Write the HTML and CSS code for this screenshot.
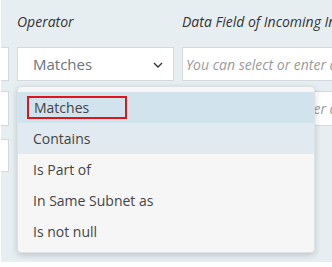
FILE: index.html
```html
<!DOCTYPE html>
<html>
<head>
<meta charset="utf-8">
<link rel="stylesheet" href="styles.css">
</head>
<body>
<div class="page">
  <div class="panel">
    <div class="grid">
      <div class="label"></div>
      <div class="label">Operator</div>
      <div class="label">Data Field of Incoming Information</div>

      <div class="box r1"></div>
      <div class="box r1 select">
        <span class="value">Matches</span>
        <svg class="chev" width="10" height="6" viewBox="0 0 10 6"><path d="M1 1 L5 5 L9 1" fill="none" stroke="#333" stroke-width="1.4"/></svg>
      </div>
      <div class="box r1"><span class="ph">You can select or enter a value</span></div>

      <div class="box r2"></div>
      <div class="box r2"></div>
      <div class="box r2"><span class="ph">You can select or enter a value</span></div>

      <div class="box r3"></div>
    </div>

    <div class="menu">
      <div class="item selected"><span class="mark">Matches</span></div>
      <div class="item hover">Contains</div>
      <div class="item">Is Part of</div>
      <div class="item">In Same Subnet as</div>
      <div class="item">Is not null</div>
    </div>
  </div>
</div>
</body>
</html>
```
FILE: styles.css
```css
html, body {
  margin: 0;
  padding: 0;
  background: #ffffff;
  overflow: hidden;
}
body {
  width: 332px;
  height: 267px;
  font-family: "Open Sans", "Noto Sans", sans-serif;
}
.page {
  padding-left: 1px;
  height: 262px;
  overflow: hidden;
}
.panel {
  position: relative;
  background: #e7eef2;
  height: 262px;
  overflow: hidden;
}
.grid {
  display: grid;
  grid-template-columns: 100px 157px 220px;
  grid-template-rows: 20px 49px 45px 45px;
  column-gap: 8px;
  margin-left: -92px;
  padding-top: 12px;
}
.label {
  font-style: italic;
  font-size: 14px;
  color: #333;
  line-height: 20px;
  white-space: nowrap;
}
.box {
  background: #fff;
  border: 1px solid #d3d9dd;
  box-sizing: border-box;
  display: flex;
  align-items: center;
  white-space: nowrap;
  overflow: hidden;
}
.r1 {
  margin-top: 15px;
  height: 34px;
}
.r2 {
  margin-top: 10px;
  height: 35px;
}
.r3 {
  margin-top: 13px;
  height: 33px;
}
.select {
  padding: 0 10px 0 15px;
  justify-content: space-between;
}
.value {
  font-size: 15px;
  color: #687480;
}
.ph {
  font-style: italic;
  font-size: 14px;
  color: #9a9a9a;
  padding-left: 3px;
}
.chev {
  margin-top: 2px;
}
.menu {
  position: absolute;
  left: 16px;
  top: 86px;
  width: 298px;
  height: 167px;
  box-sizing: border-box;
  background: #f6f6f6;
  border: 1px solid #dde2e5;
  border-radius: 4px;
  box-shadow: 0 2px 6px rgba(0,0,0,0.18);
  padding: 5px 0 6px;
}
.item {
  height: 31px;
  display: flex;
  align-items: center;
  padding-left: 15px;
  font-size: 14px;
  color: #444;
}
.item.selected {
  background: #d1e3ec;
  padding-left: 9px;
}
.item.hover {
  background: #e0eaf0;
}
.mark {
  border: 2px solid #e0141b;
  width: 100px;
  height: 23px;
  box-sizing: border-box;
  padding-left: 5px;
  display: flex;
  align-items: center;
}
```
